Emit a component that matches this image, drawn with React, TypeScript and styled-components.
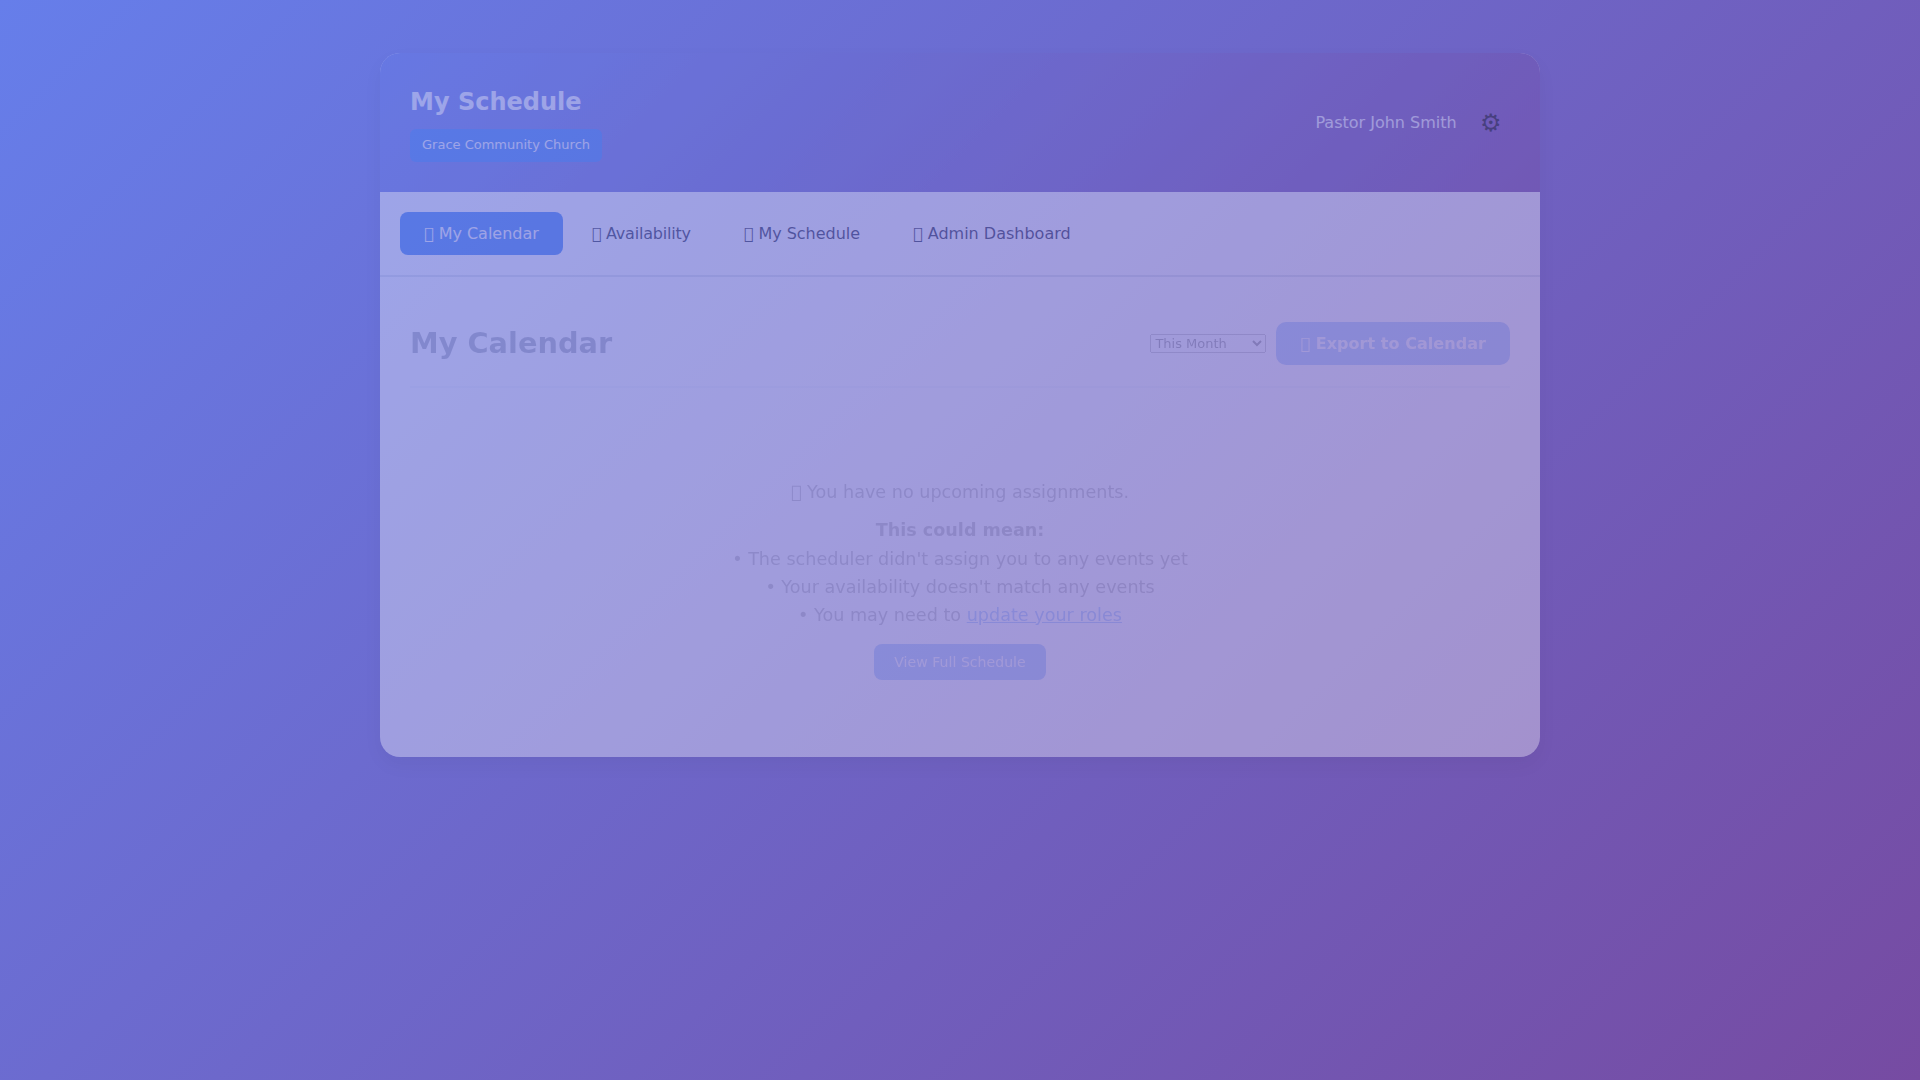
import React from "react";
import styled, { createGlobalStyle } from "styled-components";

const ENTER = 0.35;
const SHIFT = 13;
const GLYPH = "\u{F0000}";

const GlobalStyle = createGlobalStyle`
  * { margin: 0; padding: 0; box-sizing: border-box; }
  body {
    font-family: "DejaVu Sans", sans-serif;
    line-height: 1.6;
    color: #1f2a44;
    min-height: 100vh;
    padding: 20px;
    background: linear-gradient(135deg, #667eea 0%, #764ba2 100%);
  }
`;

const Page = styled.div`
  max-width: 1200px;
  margin: 0 auto;
  padding: 20px;
`;

const Card = styled.main`
  background: #fff;
  border-radius: 20px;
  overflow: hidden;
  box-shadow: 0 8px 20px rgba(0, 0, 0, 0.12);
  opacity: ${ENTER};
  transform: translateY(${SHIFT}px);
`;

const Header = styled.header`
  display: flex;
  justify-content: space-between;
  align-items: center;
  padding: 30px;
  color: #fff;
  background: linear-gradient(135deg, #667eea 0%, #764ba2 100%);
`;

const AppTitle = styled.h1`
  font-size: 24px;
`;

const OrgBadge = styled.div`
  width: fit-content;
  margin-top: 8px;
  padding: 6px 12px;
  border-radius: 6px;
  font-size: 13px;
  background: #3b82f6;
`;

const UserArea = styled.div`
  display: flex;
  align-items: center;
  gap: 15px;
`;

const SettingsButton = styled.button`
  padding: 8px 8.4px;
  border: none;
  background: none;
  color: #000;
  font-family: inherit;
  font-size: 24px;
`;

const Nav = styled.nav`
  display: flex;
  gap: 5px;
  padding: 20px;
  background: #fff;
  border-bottom: 2px solid #e0e4ec;
`;

const Tab = styled.button<{ $active?: boolean; $tracking?: number }>`
  padding: 12px 24px;
  border: none;
  border-radius: 8px;
  font-family: inherit;
  font-size: 16px;
  letter-spacing: ${(p) => p.$tracking ?? 0}px;
  color: ${(p) => (p.$active ? "#fff" : "#1f2a44")};
  background: ${(p) => (p.$active ? "#3b82f6" : "transparent")};
`;

const View = styled.section`
  padding: 30px;
  opacity: ${ENTER};
  transform: translateY(${SHIFT}px);
`;

const ViewHeader = styled.div`
  display: flex;
  justify-content: space-between;
  align-items: center;
  margin-bottom: 30px;
  padding-bottom: 20px;
  border-bottom: 2px solid #e6eaf2;
`;

const ViewTitle = styled.h2`
  font-size: 28.8px;
`;

const Actions = styled.div`
  display: flex;
  align-items: center;
  gap: 10px;
`;

const RangeSelect = styled.select`
  width: 116px;
  font-family: inherit;
  font-size: 13px;
`;

const PrimaryButton = styled.button<{ $small?: boolean }>`
  padding: ${(p) => (p.$small ? "10px 20px" : "12px 24px")};
  border: none;
  border-radius: ${(p) => (p.$small ? 8 : 10)}px;
  color: #fff;
  background: #3b82f6;
  font-family: inherit;
  font-size: ${(p) => (p.$small ? 14.08 : 16)}px;
  font-weight: ${(p) => (p.$small ? 400 : 600)};
  letter-spacing: ${(p) => (p.$small ? 0.02 : 0.05)}px;
`;

const EmptyState = styled.div`
  padding: 60px 20px;
  text-align: center;
  font-size: 17.6px;
  color: #666;
`;

const Reasons = styled.p`
  margin: 10px 0 15px;
`;

const RolesLink = styled.a`
  color: #3b82f6;
  text-decoration: underline;
`;

const ButtonRow = styled.div`
  display: flex;
  justify-content: center;
`;

export default function App() {
  return (
    <>
      <GlobalStyle />
      <Page>
        <Card>
          <Header>
            <div>
              <AppTitle>My Schedule</AppTitle>
              <OrgBadge>Grace Community Church</OrgBadge>
            </div>
            <UserArea>
              <span>Pastor John Smith</span>
              <SettingsButton>⚙</SettingsButton>
            </UserArea>
          </Header>
          <Nav>
            <Tab $active $tracking={-0.02}>{GLYPH} My Calendar</Tab>
            <Tab $tracking={-0.21}>{GLYPH} Availability</Tab>
            <Tab $tracking={-0.02}>{GLYPH} My Schedule</Tab>
            <Tab>{GLYPH} Admin Dashboard</Tab>
          </Nav>
          <View>
            <ViewHeader>
              <ViewTitle>My Calendar</ViewTitle>
              <Actions>
                <RangeSelect defaultValue="month">
                  <option value="month">This Month</option>
                  <option value="quarter">Next 3 Months</option>
                </RangeSelect>
                <PrimaryButton>{GLYPH} Export to Calendar</PrimaryButton>
              </Actions>
            </ViewHeader>
            <EmptyState>
              <p>{GLYPH} You have no upcoming assignments.</p>
              <Reasons>
                <strong>This could mean:</strong>
                <br />• The scheduler didn't assign you to any events yet
                <br />• Your availability doesn't match any events
                <br />• You may need to <RolesLink href="#">update your roles</RolesLink>
              </Reasons>
              <ButtonRow>
                <PrimaryButton $small>View Full Schedule</PrimaryButton>
              </ButtonRow>
            </EmptyState>
          </View>
        </Card>
      </Page>
    </>
  );
}
